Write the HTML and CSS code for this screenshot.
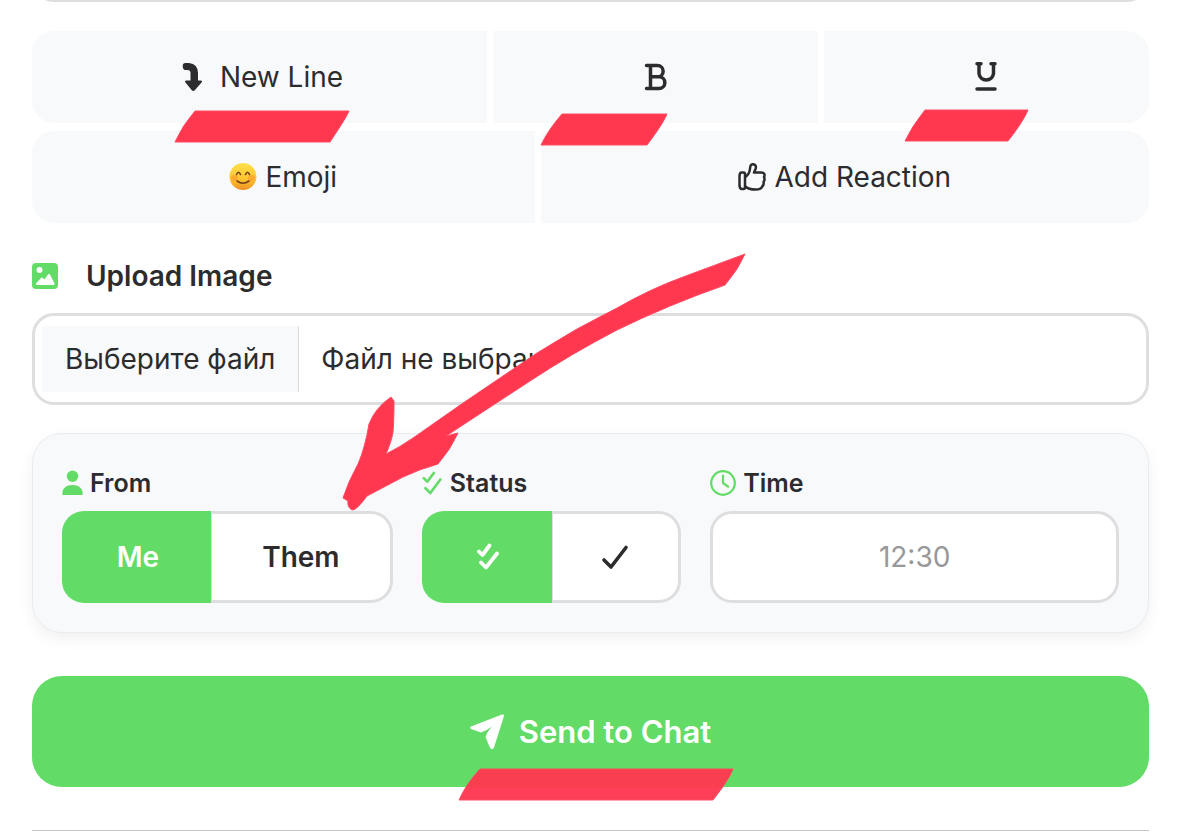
FILE: index.html
```html
<!DOCTYPE html>
<html lang="en">
<head>
    <meta charset="UTF-8">
    <meta name="viewport" content="width=device-width, initial-scale=1.0">
    <title>Chat Composer</title>
    <link rel="stylesheet" href="styles.css">
</head>
<body>
    <form class="composer">
        <textarea class="message-input" aria-label="Message"></textarea>

        <div class="toolbar">
            <div class="toolbar-row toolbar-row-format">
                <button type="button" class="tool-btn tool-btn-wide">
                    <svg class="icon-newline" viewBox="0 0 28 30" fill="currentColor"><path d="M9.500 1H13Q22 2 22 11V18.500H24.500Q27 18.500 25.500 20.500L19 28Q17.300 30 15.600 28L9.500 20.500Q8.200 18.500 10.500 18.500H14.500V11Q14.500 8 11.500 8H9Q7 8 6.700 4Q6.600 1 9.500 1Z"/></svg>
                    <span>New Line</span>
                </button>
                <button type="button" class="tool-btn" aria-label="Bold">
                    <svg class="icon-format" viewBox="0 0 28 32" fill="none" stroke="currentColor" stroke-width="3.500" stroke-linecap="round" stroke-linejoin="round"><path d="M4.500 4.500H15.500A5.300 5.300 0 0 1 15.500 15.800H9M15.500 15.800H17A5.700 5.700 0 0 1 17 27.500H4.500M8.500 4.500V27.500"/></svg>
                </button>
                <button type="button" class="tool-btn" aria-label="Underline">
                    <svg class="icon-format" viewBox="0 0 28 32" fill="none" stroke="currentColor" stroke-width="3.500" stroke-linecap="round" stroke-linejoin="round"><path d="M4 2.800H8M18 2.800H22M6 2.800V12.500A7.300 7.300 0 0 0 20.500 12.500V2.800M4 28H22"/></svg>
                </button>
            </div>
            <div class="toolbar-row toolbar-row-extra">
                <button type="button" class="tool-btn">
                    <svg class="icon-tool" viewBox="0 0 28 28">
                        <defs>
                            <linearGradient id="face" x1="0" y1="0" x2="0" y2="1">
                                <stop offset="0" stop-color="#ffe04a"/>
                                <stop offset="0.600" stop-color="#fdc52e"/>
                                <stop offset="1" stop-color="#ef8f22"/>
                            </linearGradient>
                        </defs>
                        <circle cx="14" cy="13.500" r="13.500" fill="url(#face)"/>
                        <ellipse cx="5.500" cy="15" rx="3.500" ry="3" fill="#ff7a2f" opacity="0.400"/>
                        <ellipse cx="22.500" cy="15" rx="3.500" ry="3" fill="#ff7a2f" opacity="0.400"/>
                        <path d="M7.500 11.500Q9.500 7 11.500 11.500M16.500 11.500Q18.500 7 20.500 11.500M8 18Q14 22.500 20 18" fill="none" stroke="#76401a" stroke-width="1.600" stroke-linecap="round"/>
                    </svg>
                    <span>Emoji</span>
                </button>
                <button type="button" class="tool-btn">
                    <svg class="icon-tool" viewBox="0 0 28 28" fill="none" stroke="currentColor" stroke-width="2.500" stroke-linecap="round" stroke-linejoin="round"><path d="M3.500 9.500H5.500Q7 9.500 7 11V24.500Q7 26 5.500 26H4Q1.500 26 1.500 22V13.500Q1.500 9.500 3.500 9.500ZM7.500 14C10 12 11.800 9 12 5.500C12.200 2.500 13.500 1.200 15 1.200C17.500 1.200 18.500 3.500 17.500 6L16 9.500H23.500C26.500 9.500 27.200 12 26 14.200C27 16 26.300 18 25.500 19C26 21 25.300 22.500 24.300 23.300C23.500 26 21 26.500 17.500 26.500C12 26.500 10 26 7.500 23.500"/></svg>
                    <span>Add Reaction</span>
                </button>
            </div>
        </div>

        <div class="upload">
            <label class="upload-title" for="upload-image">
                <svg class="icon-label" viewBox="0 0 26 26"><rect width="26" height="26" rx="4" fill="currentColor"/><circle cx="7.500" cy="7" r="3" fill="#fff"/><path d="M4 20.500L9 15Q10 14 11 15L12.500 16.500L16 11.500Q17 10 18 11.500L22.500 20.500Q22.500 22 21.500 22H5Q3.500 22 4 20.500Z" fill="#fff"/></svg>
                Upload Image
            </label>
            <input type="file" class="hidden-input" id="upload-image" accept="image/*">
            <label class="file-box" for="upload-image">
                <span class="file-btn">Выберите файл</span>
                <span class="file-name">Файл не выбран</span>
            </label>
        </div>

        <div class="settings">
            <fieldset class="setting">
                <legend class="setting-title">
                    <svg class="icon-person" viewBox="0 0 22 26" fill="currentColor"><circle cx="11" cy="6" r="6"/><path d="M0.500 25.500C-0.500 19 4 15 11 15S22.500 19 21.500 25.500Z"/></svg>
                    From
                </legend>
                <div class="segment segment-from">
                    <input type="radio" class="hidden-input" name="from" id="from-me" checked>
                    <label for="from-me">Me</label>
                    <input type="radio" class="hidden-input" name="from" id="from-them">
                    <label for="from-them">Them</label>
                </div>
            </fieldset>
            <fieldset class="setting">
                <legend class="setting-title">
                    <svg class="icon-person" viewBox="0 0 24 28" fill="none" stroke="currentColor" stroke-width="3" stroke-linecap="round" stroke-linejoin="round"><path d="M2 8.500L6 12.500L13.500 2.500M4 20L9.500 25.500L21 10"/></svg>
                    Status
                </legend>
                <div class="segment segment-status">
                    <input type="radio" class="hidden-input" name="status" id="status-read" checked>
                    <label for="status-read" aria-label="Read">
                        <svg class="icon-checks" viewBox="0 0 24 28" fill="none" stroke="currentColor" stroke-width="3.800" stroke-linecap="round" stroke-linejoin="round"><path d="M3 8.500L6.500 12L13.500 2.500M5 19.500L10 24.500L21 10.500"/></svg>
                    </label>
                    <input type="radio" class="hidden-input" name="status" id="status-sent">
                    <label for="status-sent" aria-label="Sent">
                        <svg class="icon-tool" viewBox="0 0 28 28" fill="none" stroke="currentColor" stroke-width="3.600" stroke-linecap="round" stroke-linejoin="round"><path d="M3 17L10 24L25 4.500"/></svg>
                    </label>
                </div>
            </fieldset>
            <div class="setting">
                <label class="setting-title" for="time">
                    <svg class="icon-label" viewBox="0 0 26 26" fill="none" stroke="currentColor" stroke-width="2.200" stroke-linecap="round" stroke-linejoin="round"><circle cx="13" cy="13" r="11.800"/><path d="M13 5.500V13L18 16.500"/></svg>
                    Time
                </label>
                <input type="text" class="time-input" id="time" placeholder="12:30">
            </div>
        </div>

        <button type="submit" class="send-btn">
            <svg class="icon-send" viewBox="0 0 34 36" fill="currentColor"><path d="M1 12.500L32 0.500Q34.500 0 34 2L24 33.500Q22.500 36.500 20 34L15.500 23Q17 18 22 12.500Q16 17 11 18.500L1 15Q-0.500 13.500 1 12.500Z"/></svg>
            <span>Send to Chat</span>
        </button>
        <hr class="divider">
    </form>

    <!-- hand-drawn marks over the form -->
    <svg class="marks" width="1188" height="834" viewBox="0 0 1188 834" aria-hidden="true">
        <g fill="#ff3850" stroke="#ff4a62" stroke-width="1" stroke-linejoin="round">
            <path d="M195 111H349Q348 115 330 142H175Q182 126 195 111Z"/>
            <path d="M562 114H667Q663 124 647 145H541Q548 130 562 114Z"/>
            <path d="M925 110H1028Q1023 122 1008 141H905Q912 126 925 110Z"/>
            <path d="M480 769H733Q729 780 713 800H459Q466 784 480 769Z" opacity="0.960"/>
            <path d="M745 254Q738 270 725 285Q668 305 617 330Q571 354 530 381L446 436L458 433Q451 449 438 464Q420 469 403 477L367 496Q356 511 352 510Q347 507 348 501L343 498Q348 482 358 464Q365 448 369 424Q375 408 391 397L394 401Q394 422 393 432Q392 440 386 454Q400 447 413 438L463 403L537 353Q576 328 617 308Q650 289 683 277Z"/>
        </g>
    </svg>
</body>
</html>
```

FILE: styles.css
```css
* {
    box-sizing: border-box;
}
body {
    margin: 0;
    overflow: hidden;
    font-family: Inter, "Noto Sans", sans-serif;
    font-size: 28px;
    line-height: 34px;
    color: #2c2c2e;
    background-color: #fff;
}
button, input, textarea {
    font: inherit;
    color: inherit;
}
svg {
    display: block;
    flex: none;
}
.composer {
    padding: 0 39px 0 32px;
}
.message-input {
    display: block;
    width: 100%;
    height: 92px;
    margin-top: -90px;
    border: 3px solid #dedee0;
    border-radius: 22px;
    resize: none;
}
.toolbar {
    display: grid;
    gap: 8px;
    margin-top: 29px;
}
.toolbar-row {
    display: grid;
    gap: 6px;
    border-radius: 22px;
    overflow: hidden;
}
.toolbar-row-format {
    grid-template-columns: 7fr 5fr 5fr;
}
.toolbar-row-extra {
    grid-template-columns: 19fr 23fr;
}
.tool-btn {
    display: flex;
    align-items: center;
    justify-content: center;
    gap: 8px;
    height: 92px;
    border: none;
    background-color: #f8f9fb;
    cursor: pointer;
}
.tool-btn-wide {
    gap: 16px;
}
.icon-newline {
    width: 28px;
    height: 30px;
}
.icon-format {
    width: 28px;
    height: 32px;
}
.icon-tool {
    width: 28px;
    height: 28px;
}
.icon-label {
    width: 26px;
    height: 26px;
    color: #62dc67;
}
.icon-person {
    width: 21px;
    height: 26px;
    color: #62dc67;
}
.icon-checks {
    width: 24px;
    height: 28px;
}
.icon-send {
    width: 34px;
    height: 36px;
}
.upload {
    position: relative;
    margin-top: 36px;
}
.upload-title {
    display: flex;
    align-items: center;
    gap: 28px;
    font-weight: 600;
}
.hidden-input {
    position: absolute;
    opacity: 0;
    pointer-events: none;
}
.file-box {
    display: flex;
    align-items: center;
    height: 92px;
    margin-top: 20px;
    padding: 0 7px;
    border: 3px solid #dedee0;
    border-radius: 22px;
    background-color: #fff;
}
.file-btn {
    padding: 16px 23px;
    border-right: 1px solid #d8dade;
    background-color: #f8f9fb;
}
.file-name {
    padding-left: 22px;
}
.settings {
    display: grid;
    grid-template-columns: 51fr 40fr 63fr;
    gap: 29px;
    margin-top: 28px;
    padding: 32px 29px 29px;
    border: 1px solid #e9ecef;
    border-radius: 30px;
    background-color: #f8f9fb;
    box-shadow: 0 6px 16px rgba(0, 0, 0, 0.06);
}
.setting {
    position: relative;
    min-width: 0;
    margin: 0;
    padding: 0;
    border: none;
}
.setting-title {
    display: flex;
    align-items: center;
    gap: 7px;
    margin-bottom: 11px;
    padding: 0;
    font-size: 25px;
    font-weight: 600;
}
.segment {
    display: grid;
    height: 92px;
}
.segment-from {
    grid-template-columns: 9fr 11fr;
}
.segment-status {
    grid-template-columns: 1fr 1fr;
}
.segment label {
    display: flex;
    align-items: center;
    justify-content: center;
    border: 3px solid #dedee0;
    background-color: #fff;
    font-weight: 600;
    cursor: pointer;
}
.segment label:first-of-type {
    border-right: none;
    border-radius: 22px 0 0 22px;
}
.segment label:last-of-type {
    border-left-width: 1px;
    border-radius: 0 22px 22px 0;
}
.segment input:checked + label {
    border-color: #62dc67;
    background-color: #62dc67;
    color: #fff;
}
.time-input {
    display: block;
    width: 100%;
    height: 92px;
    border: 3px solid #dedee0;
    border-radius: 22px;
    background-color: #fff;
    text-align: center;
}
.time-input::placeholder {
    color: #98989a;
}
.send-btn {
    display: flex;
    align-items: center;
    justify-content: center;
    gap: 15px;
    width: 100%;
    height: 111px;
    margin-top: 43px;
    border: none;
    border-radius: 30px;
    background-color: #62dc67;
    color: #fff;
    font-size: 31px;
    font-weight: 600;
    cursor: pointer;
}
.divider {
    height: 1px;
    margin: 43px 0 0;
    border: none;
    background-color: #c6c6c9;
}
.marks {
    position: absolute;
    top: 0;
    left: 0;
    pointer-events: none;
}
```
